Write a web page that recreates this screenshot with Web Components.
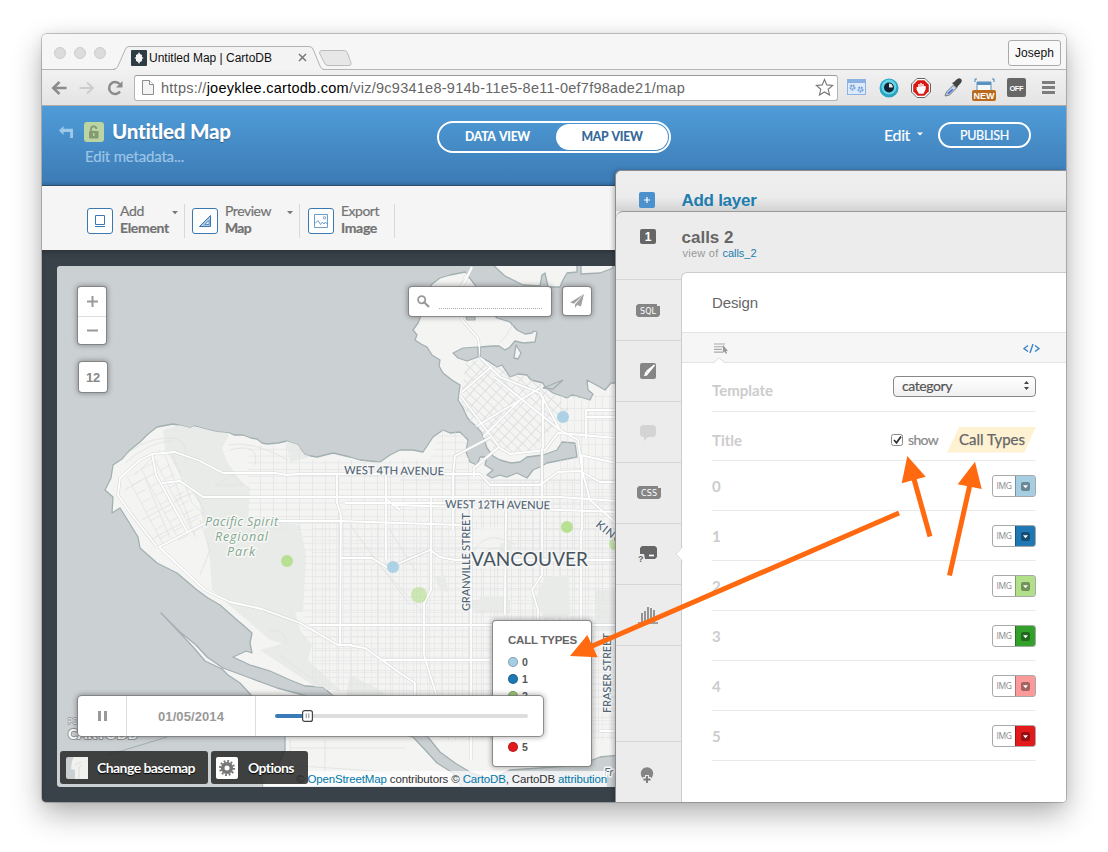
<!DOCTYPE html>
<html lang="en">
<head>
<meta charset="utf-8">
<title>Untitled Map | CartoDB</title>
<style>
html,body{margin:0;height:100%;overflow:hidden}
body{background:#fff;font-family:"Liberation Sans",Arial,sans-serif;display:flex;align-items:flex-start;justify-content:flex-start;padding:34px 42px;box-sizing:border-box;position:relative}
</style>
</head>
<body>
<browser-window>
  <browser-tabs slot="tabs"></browser-tabs>
  <browser-toolbar slot="toolbar"></browser-toolbar>
  <map-page></map-page>
</browser-window>
<pointer-arrows></pointer-arrows>

<script>
function define(name, html, setup) {
  const t = document.createElement('template');
  t.innerHTML = '<style>:host,*{box-sizing:border-box}svg{display:block;flex:none}</style>' + html;
  customElements.define(name, class extends HTMLElement {
    constructor() {
      super();
      this.attachShadow({mode: 'open'}).append(t.content.cloneNode(true));
    }
    connectedCallback() { if (setup) setup(this, this.shadowRoot); }
  });
}

define('browser-window', `
<style>
:host{display:flex;flex-direction:column;width:1024px;height:768px;border-radius:5px 5px 4px 4px;overflow:visible;position:relative;
 box-shadow:0 0 0 1px rgba(0,0,0,.2),0 12px 30px rgba(0,0,0,.31),0 0 12px rgba(0,0,0,.07)}
.in{display:flex;flex-direction:column;height:100%;border-radius:5px 5px 4px 4px;overflow:hidden;background:#f5f5f5}
</style>
<div class="in"><slot name="tabs"></slot><slot name="toolbar"></slot><slot></slot></div>`);

define('browser-tabs', `
<style>
:host{display:flex;height:36px;background:#f6f6f6;border-bottom:1px solid #b5b5b5;flex:none;align-items:center;position:relative}
.shape{position:absolute;left:0;top:0}
.lights{display:flex;gap:8px;padding-left:12px;position:relative;top:1px}
.lights i{width:12px;height:12px;border-radius:6px;background:#dcdcdc;border:1px solid #cdcdcd}
.tab{display:flex;align-items:center;margin-left:25px;position:relative;font-size:12px;color:#111;padding-top:12px;width:176px}
.tab fit-text{margin-left:2px}
.x{margin-left:auto}
.user{margin-left:auto;margin-right:5px;height:26px;width:53px;border:1px solid #aaa;border-radius:3px;background:#f9f9f9;display:flex;align-items:center;justify-content:center;font-size:12px;color:#111;margin-top:2px}
</style>
<svg class="shape" width="340" height="36" viewBox="42 34 340 36">
<path d="M114 70Q117 69 118 66L125.500 49Q126.500 46.500 129 46.500H309Q312 46.500 313 49L320 66Q321 69 324 70Z" fill="#f3f3f3"/>
<path d="M113 69.500Q117 69 118 66L125.500 49Q126.500 46.500 129 46.500H309Q312 46.500 313 49L320 66Q321 69 324 69.500" fill="none" stroke="#b2b2b2"/>
<path d="M322 50.500H344Q346.500 50.500 347.500 53L351 63Q351.500 65.500 349 65.500H328Q325.500 65.500 324.500 63L319.500 53Q319.500 50.500 322 50.500Z" fill="#e7e7e7" stroke="#bbb"/></svg>
<div class="lights"><i></i><i></i><i></i></div>
<div class="tab">
<svg width="16" height="16"><rect width="16" height="16" rx="1" fill="#2e3c43"/><path d="M8 2l1 2 2 1v2l1.500 1L11 9v2l-2 1-1 2-1-2-2-1V9L3.500 8 5 7V5l2-1z" fill="#f5f5f5"/></svg>
<fit-text w="123">Untitled Map | CartoDB</fit-text>
<svg class="x" width="9" height="9"><path d="M1 1l7 7M8 1l-7 7" stroke="#777" stroke-width="1.500"/></svg></div>
<div class="user"><fit-text w="39">Joseph</fit-text></div>`);

define('browser-toolbar', `
<style>
:host{display:flex;height:36px;flex:none;background:linear-gradient(#f1f1f1,#e4e4e4);border-bottom:1px solid #b0a9a5;align-items:center;padding-left:9px}
.nav{display:flex;gap:12px;width:83px}
.url{width:704px;height:26px;border:1px solid #b4b4b4;border-top-color:#999;border-radius:3px;background:#fff;display:flex;align-items:center;padding:0 3px 0 7px;font-size:14.500px;color:#666}
.url b{font-weight:400;color:#000}
.url fit-text{margin-left:7px}
.url .star{margin-left:auto}
.ext{display:flex;align-items:center;padding-left:9px}
.ext svg{margin-right:12.5px}
</style>
<div class="nav">
<svg width="16" height="16"><path d="M15.500 8H3M8.500 2L2.200 8l6.300 6" fill="none" stroke="#8b8b8b" stroke-width="2.500"/></svg>
<svg width="16" height="16"><path d="M.5 8H13M8 2.500L13.800 8 8 13.500" fill="none" stroke="#cdcdcd" stroke-width="2"/></svg>
<svg width="17" height="16"><path d="M13 11.500A6 6 0 1 1 12.600 4" fill="none" stroke="#8b8b8b" stroke-width="2.500"/><path d="M15.500 1v6.500H9z" fill="#8b8b8b"/></svg></div>
<div class="url"><svg width="12" height="15"><path d="M.5.5h7l4 4v10H.5z" fill="#f4f4f4" stroke="#8d8d8d"/><path d="M7.500.5v4h4" fill="#fff" stroke="#8d8d8d"/></svg>
<fit-text w="524">https://<b>joeyklee.cartodb.com</b>/viz/9c9341e8-914b-11e5-8e11-0ef7f98ade21/map</fit-text>
<svg class="star" width="19" height="19"><path d="M9.500 1.500l2.300 5.400 5.900.5-4.500 3.900 1.400 5.700-5.100-3-5.100 3 1.400-5.700L1.300 7.400l5.900-.5z" fill="#fdfdfd" stroke="#777" stroke-width="1.100"/></svg></div>
<div class="ext">
<svg width="19" height="17"><rect x=".5" y=".5" width="18" height="15" fill="#dce9fa" stroke="#8fb3e0"/><path d="M1 1h17v3H1z" fill="#8bb1e4"/><circle cx="5.500" cy="8.500" r="2" fill="none" stroke="#6b9bdb" stroke-width="2" stroke-dasharray="1.500 .7"/><circle cx="13.500" cy="10.500" r="2" fill="none" stroke="#6b9bdb" stroke-width="2" stroke-dasharray="1.500 .7"/></svg>
<svg width="20" height="20"><circle cx="10" cy="10" r="9.500" fill="#2aa3c0"/><circle cx="10" cy="9" r="7.500" fill="#62d4e8"/><circle cx="10" cy="9.500" r="5" fill="#123"/><path d="M10 9.500V5.500a4 4 0 0 1 3.800 4z" fill="#e8e8e8"/></svg>
<svg width="20" height="20"><path d="M6 .5h8L19.500 6v8L14 19.500H6L.5 14V6z" fill="#fff" stroke="#666"/><path d="M6.700 2.200h6.600l4.500 4.500v6.600l-4.500 4.500H6.700l-4.500-4.500V6.700z" fill="#d81a14"/><path d="M6.300 9v2.500l2 3.500h3.700l2-4V8M8 10.500V6M10 10V5M12 10V6" stroke="#fff" stroke-width="1.400" fill="#fff"/></svg>
<svg width="18" height="19"><path d="M1 18l1.500-4 7-7 3 3-7 7z" fill="#c4d5ef" stroke="#777"/><path d="M3 15.500L8 11l1.500.5-4.500 4.500z" fill="#3f69d4"/><path d="M8 5l2-1 2-2q3-3 5-1t-1 5l-2 2-1 2z" fill="#444"/></svg>
<svg width="24" height="24" viewBox="0 0 24 24" style="margin:2px 11px 0 -2px"><path d="M3 5V2h2M20 2h2v3" fill="none" stroke="#4384b0"/><path d="M5 13V5h14v8" fill="#f5f8fb" stroke="#5a93bd"/><path d="M5 5h14v3H5z" fill="#5a93bd"/><rect y="13" width="24" height="11" rx="2" fill="#b96a1d"/><text x="12" y="22" font-size="9" font-weight="700" text-anchor="middle" textLength="21" fill="#fff" font-family="Liberation Sans,Arial,sans-serif">NEW</text></svg>
<svg width="19" height="19"><rect width="19" height="19" rx="2" fill="#666"/><text x="9.500" y="12.500" font-size="7.500" font-weight="700" text-anchor="middle" textLength="14" fill="#fff" font-family="Liberation Sans,Arial,sans-serif">OFF</text></svg>
<svg width="13" height="13" style="margin:0 0 0 3px"><path d="M0 1.500h13M0 6.500h13M0 11.500h13" stroke="#7d7d7d" stroke-width="2.800"/></svg></div>`);

define('map-page', `
<style>:host{display:flex;flex-direction:column;flex:1;position:relative;min-height:0}
layer-panel{position:absolute;left:573px;top:64px;right:0;bottom:0}</style>
<page-header></page-header><page-tools></page-tools><map-stage></map-stage><layer-panel></layer-panel>`);

define('page-header', `
<style>
:host{display:flex;height:80px;flex:none;background:linear-gradient(#4f9cd8,#3d7cb6 95%,#346b9f);border-bottom:1px solid #2d4d6d;color:#fff;font-family:Lato,sans-serif;padding:15px 35px 0 17px;align-items:flex-start}
.back{margin-top:5px}
.lock{margin:1px 8px 0 10px}
.meta{width:353px;display:flex;flex-direction:column}
.t{font-weight:900;font-size:20.500px;line-height:21px;text-shadow:0 1px 1px rgba(0,0,0,.3)}
.m{font-size:15px;line-height:20px;color:#9cc4e6;margin:4px 0 0 -27px;-webkit-text-stroke:.2px}
.sw{width:234px;height:32px;border:2px solid #fff;border-radius:16px;display:flex;font-weight:900;font-size:12.2px;align-items:center;flex:none;margin-left:-28px;word-spacing:1.5px}
.sw div{flex:1;text-align:center;line-height:26px}
.sw .on{background:#fff;color:#36699a;border-radius:13px;height:26px;flex:none;width:112px;margin-right:1px}
.edit{margin-left:auto;font-size:16px;display:flex;align-items:center;height:28px;gap:7px;margin-top:-1px;-webkit-text-stroke:.2px}
.pub{margin:1px 0 0 15px;width:93px;height:26px;border:2px solid #fff;border-radius:13px;display:flex;align-items:center;justify-content:center;font-size:12.5px;-webkit-text-stroke:.2px}
</style>
<svg class="back" width="15" height="13"><path d="M4.500 0v2.800H14V12h-2.800V6H4.500v3L0 4.500z" fill="#9fc9ea"/></svg>
<svg class="lock" width="20" height="20"><rect width="20" height="20" rx="3" fill="#bcd3a3"/><path d="M7 10V7a2.700 2.700 0 0 1 5.400 0" fill="none" stroke="#849a73" stroke-width="1.800"/><rect x="5" y="9" width="9.500" height="7.500" rx="1" fill="#849a73"/><path d="M9.800 11v3" stroke="#bcd3a3" stroke-width="1.500"/></svg>
<div class="meta"><div class="t"><fit-text w="119">Untitled Map</fit-text></div><div class="m"><fit-text w="99">Edit metadata...</fit-text></div></div>
<div class="sw"><div><fit-text w="65">DATA VIEW</fit-text></div><div class="on"><fit-text w="61">MAP VIEW</fit-text></div></div>
<div class="edit"><fit-text w="26">Edit</fit-text><svg width="6" height="4"><path d="M0 .5h6L3 3.500z" fill="#fff"/></svg></div>
<div class="pub"><fit-text w="49">PUBLISH</fit-text></div>`);

define('tool-item', `
<style>
:host{display:flex;align-items:flex-start;height:34px;border-right:1px solid #d9d9d9;flex:none}
.ic{width:26px;height:26px;border:1px solid #3a79b0;border-radius:3px;background:#fff;margin-top:4px;display:flex;align-items:center;justify-content:center}
.tx{margin:-2px 0 0 7px;font:14px/17px Lato,sans-serif;color:#737373;display:flex;flex-direction:column;align-items:flex-start;-webkit-text-stroke:.2px}
.tx b{font-weight:700}
.c{margin:7px 6px 0 auto}
</style>
<div class="ic"><slot name="icon"></slot></div><div class="tx"><slot name="a"></slot><b><slot name="b"></slot></b></div>
<svg class="c" width="6" height="4"><path d="M0 0h6L3 3.200z" fill="#777"/></svg>`,
(el, r) => { if (el.hasAttribute('plain')) r.querySelector('.c').style.display = 'none'; });

define('page-tools', `
<style>
:host{display:flex;height:64px;flex:none;background:#f5f5f5;padding:18px 0 0 45px}
</style>
<tool-item style="width:98px"><svg slot="icon" width="12" height="14"><path d="M1.500 1.500h9v9h-9z" fill="none" stroke="#3a79b0"/><path d="M1 12.500h10" stroke="#3a79b0"/></svg><fit-text slot="a" w="24">Add</fit-text><fit-text slot="b" w="49">Element</fit-text></tool-item>
<tool-item style="width:108px;margin-left:7px"><svg slot="icon" width="14" height="14"><path d="M1.500 12.500h11V1.500z" fill="#a9c8e6" stroke="#3a79b0"/><path d="M7 10.500h4V6.500z" fill="#fff" stroke="#3a79b0" stroke-width=".8"/></svg><fit-text slot="a" w="46">Preview</fit-text><fit-text slot="b" w="26">Map</fit-text></tool-item>
<tool-item plain style="width:87px;margin-left:8px"><svg slot="icon" width="14" height="14"><path d="M.5.5h13v13H.5z" fill="none" stroke="#6d9dca"/><path d="M1 9.500l3-3 2.500 4 2-2.500 1.500 2 1.500-2 2 2.500" fill="none" stroke="#6d9dca"/><circle cx="10.500" cy="3.800" r="1.200" fill="none" stroke="#6d9dca"/></svg><fit-text slot="a" w="38">Export</fit-text><fit-text slot="b" w="36">Image</fit-text></tool-item>`);

define('map-stage', `
<style>
:host{display:block;flex:1;background:#394149;padding:16px 0 15px 15px;min-height:0;box-shadow:inset 0 4px 5px -2px #2b3238}
.map{position:relative;width:559px;height:521px;border-radius:3px 0 0 3px;overflow:hidden}
.box{position:absolute;background:#fff;border-radius:3px;box-shadow:0 0 0 1px rgba(120,120,120,.75),0 0 5px 2px rgba(0,0,0,.28)}
.zoom{left:21px;top:21px;width:28px;height:57px;display:grid;grid-template-rows:1fr 1fr;place-items:center}
.zoom div{width:28px;height:100%;display:grid;place-items:center}
.zoom div+div{border-top:1px solid #ddd}
.lvl{left:22px;top:96px;width:28px;height:30px;display:grid;place-items:center;font:bold 13px "Liberation Sans",sans-serif;color:#888}
.search{left:352px;top:21px;width:142px;height:29px;display:flex;padding-left:8px}
.search svg{margin-top:8px}
.search i{width:103px;height:22px;border-bottom:1px dotted #aaa;margin-left:9px}
.send{left:506px;top:21px;width:28px;height:28px;display:grid;place-items:center}
.legend{left:436px;top:355px;width:98px;height:145px;padding:12px 0 0 15px;font:bold 11.500px "Liberation Sans",sans-serif;color:#666}
.legend .h{line-height:15px;margin-bottom:5px;height:15px}
.player{left:21px;top:430px;width:465px;height:40px;display:flex;align-items:stretch;border-radius:4px}
.pause{width:49px;border-right:1px solid #ddd;display:grid;place-items:center}
.date{width:129px;border-right:1px solid #ddd;display:grid;place-items:center;font:bold 13px "Liberation Sans",sans-serif;color:#999}
.track{flex:1;display:flex;align-items:center;padding:0 15px 0 19px}
.track i{height:4px;background:#ddd;flex:1;border-radius:0 2px 2px 0}
.track i.d{background:#397bb9;flex:none;width:27px;border-radius:2px 0 0 2px}
.attr{position:absolute;right:9px;bottom:0;height:16px;width:344px;background:rgba(255,255,255,.7);font:11.500px/16px "Liberation Sans",sans-serif;color:#333;display:flex;justify-content:flex-end}
.attr a{color:#0078a8}
.btns{position:absolute;left:3px;bottom:3px;display:flex;gap:3px}
.btn{height:33px;background:rgba(38,38,38,.86);border-radius:3px;display:flex;align-items:center;padding-left:6px;color:#fff;font:bold 14px Lato,sans-serif;text-shadow:0 1px 1px #000}
.btn fit-text{margin-left:9px}
</style>
<div class="map"><city-map></city-map>
<div class="attr"><fit-text w="311">© <a>OpenStreetMap</a> contributors © <a>CartoDB</a>, CartoDB <a>attribution</a></fit-text></div>
<div class="box zoom"><div><svg width="11" height="11"><path d="M0 5.500h11M5.500 0v11" stroke="#999" stroke-width="2"/></svg></div><div><svg width="11" height="11"><path d="M0 5.500h11" stroke="#999" stroke-width="2"/></svg></div></div>
<div class="box lvl"><fit-text w="14">12</fit-text></div>
<div class="box search"><svg width="13" height="13"><circle cx="4.700" cy="4.700" r="3.600" fill="none" stroke="#999" stroke-width="1.800"/><path d="M7.500 7.500L12 12" stroke="#999" stroke-width="2.200"/></svg><i></i></div>
<div class="box send"><svg width="14" height="14"><path d="M14 0L0 8.500l4 1.200zM14 0L5 10.500V14l2.200-3L11 12.500z" fill="#a2a2a2"/></svg></div>
<div class="box legend"><div class="h"><fit-text w="69">CALL TYPES</fit-text></div>
<legend-row color="#a6cee3">0</legend-row><legend-row color="#1f78b4">1</legend-row><legend-row color="#9fce79">2</legend-row><legend-row color="#33a02c">3</legend-row><legend-row color="#fb9a99">4</legend-row><legend-row color="#e31a1c">5</legend-row></div>
<div class="box player"><div class="pause"><svg width="9" height="10"><path d="M1.500 0v10M7.500 0v10" stroke="#999" stroke-width="3"/></svg></div><div class="date"><fit-text w="66">01/05/2014</fit-text></div>
<div class="track"><i class="d"></i><svg width="11" height="12"><rect x=".6" y=".6" width="9.800" height="10.800" rx="2" fill="#fff" stroke="#444" stroke-width="1.200"/><path d="M4.200 3.500v4.500M6.800 3.500v4.500" stroke="#888"/></svg><i></i></div></div>
<div class="btns"><div class="btn" style="width:148px"><svg width="22" height="22"><rect width="22" height="22" rx="2" fill="#cbd0d3"/><path d="M8 0h14v22H9V13L5 12 6 4z" fill="#f1f1ee"/><path d="M13 22V10l3-2M9 8l6-3" stroke="#ddd" fill="none"/></svg><fit-text w="98">Change basemap</fit-text></div>
<div class="btn" style="width:97px;padding-left:5px"><svg width="22" height="22"><rect width="22" height="22" rx="2" fill="#fff"/><circle cx="11" cy="11" r="6.800" fill="none" stroke="#777" stroke-width="2.400" stroke-dasharray="1.800 1.760"/><circle cx="11" cy="11" r="4.300" fill="none" stroke="#777" stroke-width="3.600"/></svg><fit-text w="46" style="margin-left:10px">Options</fit-text></div></div>
</div>`);

define('legend-row', `
<style>:host{display:flex;align-items:center;height:17px;gap:4px;font-size:10.5px;color:#555}
i{width:10px;height:10px;border-radius:5px;border:1px solid rgba(0,0,0,.22)}span{padding-top:1px}</style><i></i><span><slot></slot></span>`,
(el, r) => { r.querySelector('i').style.background = el.getAttribute('color'); });

/* Street map: land, parks, street grids, arterials, labels and data points. */
define('city-map', `
<style>:host{display:block}
.c{fill:#f4f4f3;stroke:#a3b0b1;stroke-width:1.300;stroke-linejoin:round}
.w{fill:#cbd0d3;stroke:#a3b0b1;stroke-width:1.200;stroke-linejoin:round}
.p{fill:#e9ebe9}
.r0{fill:none;stroke:#d8dad9;stroke-width:3;stroke-linejoin:round}
.r1{fill:none;stroke:#fff;stroke-width:1.800;stroke-linejoin:round}
.s{fill:none;stroke:#dfe1e0;stroke-width:.8}
text{paint-order:stroke;stroke:#f7f7f6;stroke-width:3px;stroke-linejoin:round;font-family:Lato,sans-serif}
.a{fill:#536676;font-size:11.3px}
.a.b{stroke-width:2.500px;font-weight:500}
.g{fill:#83a88e;font:italic 12.5px "Open Sans",sans-serif}
</style>
<svg width="559" height="521" viewBox="57 266 559 521">
<defs>
<pattern id="g1" width="13" height="6.700" patternUnits="userSpaceOnUse"><path d="M.5 0V6.700M0 .5H13" stroke="#e4e5e5" stroke-width=".8" fill="none"/></pattern>
<pattern id="g2" width="7" height="12" patternUnits="userSpaceOnUse"><path d="M.5 0V12M0 .5H7" stroke="#e4e5e5" stroke-width=".8" fill="none"/></pattern>
<pattern id="g3" width="9" height="6.500" patternUnits="userSpaceOnUse" patternTransform="rotate(43)"><path d="M.5 0V6.500M0 .5H9" stroke="#dddfdf" stroke-width=".9" fill="none"/></pattern>
<pattern id="g4" width="16" height="10" patternUnits="userSpaceOnUse" patternTransform="rotate(-28)"><path d="M.5 0V10M0 .5H12" stroke="#e2e4e4" stroke-width=".8" fill="none"/></pattern>
<clipPath id="land"><path id="ls" d="M105 490L111 478 113 465 122 459 130 450 140 442 148 434 157 427 173 424 183 426 190 428 194 426 205 429 217 432 230 433 234 435 243 435 251 438 257 439 262 443 267 444 278 443 287 441 298 445 301 450 305 455 317 457 325 455 333 453 350 457 360 460 380 462 390 455 400 450 413 450 423 452 429 443 433 437 443 430 450 433 460 432 468 440 466 452 470 462 477 465 480 457 487 457 485 465 493 470 487 475 492 478 500 475 507 477 517 473 527 478 533 470 540 467 547 463 577 457 575 443 562 442 557 450 543 455 527 457 520 462 511 463 500 460 493 456 487 448 482 433 477 427 470 421 467 417 463 408 458 400 460 385 452 380 443 373 439 366 440 360 432 355 427 347 421 344 415 340 417 335 413 330 418 323 420 318 424 300 432 284 440 278 450 275 465 272 475 285 485 305 497 318 510 322 517 330 525 334 532 333 534 331 537 332 535 342 523 343 515 341 510 347 505 350 499 346 493 346 480 347 480 357 488 361 497 367 502 365 504 368 510 377 518 374 527 375 531 380 543 383 545 387 553 393 567 398 572 395 580 397 590 400 593 394 588 390 587 380 598 386 605 390 611 383 620 383V755L600 757 580 765 540 768 510 770 490 780 470 772 455 763 440 752 428 737 380 718 332 695 323 687 305 686 290 680 270 671 250 665 233 657 242 653 246 651 252 653 250 643 252 633 243 625 237 620 220 605 208 598 197 590 177 573 157 563 140 548 138 537 130 524 120 508 112 513 113 497Z"/></clipPath>
</defs>
<rect x="57" y="266" width="559" height="521" fill="#cbd0d3"/>
<path class="c" d="M493 265L505 276 523 285 540 286 542 275 545 273 548 287 560 287 563 280 567 273 577 272V265ZM581 265V274L600 273 613 268V265Z"/>
<use href="#ls" class="c"/>
<path class="c" d="M161 613L180 632 196 645 207 657 223 668 250 678 277 688 307 696 360 722 413 737 427 752 437 763 453 773 462 787H263L264 778 270 773 279 763 285 750V735L251 695 240 683 228 675 222 669 205 661 194 648 180 633Z"/>
<g clip-path="url(#land)">
<path class="p" d="M163 430L183 424 230 433 222 448 227 462 240 480 250 488 248 520 300 525 306 555 303 612 295 612 300 630 312 645 305 650 270 640 212 590 210 560 200 505 182 475 165 450ZM286 441L302 445 310 457 290 462ZM350 675L380 690 400 710 380 720 345 700ZM470 600H510V613H475ZM595 590H620V630H595ZM295 640L312 645 308 660 340 690 320 690 260 650Z"/>
<path fill="url(#g1)" d="M250 445H300V460H430L440 430H470V480H620V740H445L312 680V640H303V530H248V450Z"/>
<path fill="url(#g2)" d="M312 520H620V740H445L400 712 380 690 312 690Z" opacity=".7"/>
<path fill="url(#g2)" d="M560 395H620V600H480V480H560Z" opacity=".8"/>
<path fill="url(#g3)" d="M466 362L480 360 545 385 570 410 555 425 530 455 490 448 462 415 462 390Z"/>
<path fill="url(#g4)" d="M122 480L155 460 178 462 205 535 160 545Z"/>
<path fill="#f4f4f3" d="M470 530L505 525 508 560 480 570 465 550Z" opacity=".8"/>
<path class="p" d="M545 577L569 575 570 615 545 620 535 600ZM480 597H508V610H476ZM435 578l10-3 4 18-10-5zM500 543h12v10h-12z"/>
<path class="s" d="M120 460q20-20 45-22t20 25M125 463q25-22 48-22M135 475L160 450M165 455l30 80M172 453l20 50 20 20M230 450q30-8 25 15M228 445q25-5 60 15M215 485l18-10 10 10zM142 520l40-22M150 540l32-17M125 490l20-12 25 60M175 500l20-8 10 20-18 8M470 560q12-35 45-15M475 565q12-27 38-10M480 570q8-15 30-5M200 520l10 30-10 25M350 525l60 80M390 530l25 40M268 630q20 0 18 15M280 655l40 30M470 320q-5-20-10-35M515 320q-10 20-15 22"/>
</g>
<g class="s"><path d="M400 480H615M340 548H615M370 555L430 620M470 640V690M290 748h115M290 740v47M325 740v47M285 765l120 8M330 775q60-10 90 10"/></g>
<g id="roads" clip-path="url(#land)"></g>
<g id="bridges"></g>
<path class="w" d="M453 353L463 348 478 347 478 357 467 361 458 358ZM466 317h9v3h-8z"/>
<path d="M108 755L167 737M543 388l20-8-10 9z" fill="none" stroke="#a3b0b1" stroke-width="1.300"/>
<path class="c" d="M516 345l5 8-3 6-4-1z"/>
<g fill-opacity=".9"><circle cx="563" cy="417" r="6" fill="#a6cee3"/><circle cx="393" cy="567" r="6" fill="#a6cee3"/><circle cx="287" cy="561" r="6" fill="#b2df8a"/><circle cx="567" cy="527" r="6" fill="#b2df8a"/><circle cx="419" cy="595" r="8" fill="#b2df8a" fill-opacity=".6"/><circle cx="615" cy="544" r="6" fill="#b2df8a" fill-opacity=".7"/></g>
<text class="a b" x="344" y="474" textLength="100" transform="rotate(.7 344 474)">WEST 4TH AVENUE</text>
<text class="a b" x="445" y="508" textLength="105" transform="rotate(.7 445 508)">WEST 12TH AVENUE</text>
<text class="a b" transform="translate(470 611) rotate(-90)" textLength="98">GRANVILLE STREET</text>
<text class="a b" transform="translate(611 713) rotate(-90)" textLength="80">FRASER STREET</text>
<text class="a b" transform="translate(595 526) rotate(38)" textLength="30">KING</text>
<text class="a" x="604" y="776" font-style="italic">Fr</text>
<text x="471" y="566" textLength="117" font-size="19" fill="#47545f">VANCOUVER</text>
<text class="g" x="205" y="526" textLength="73">Pacific Spirit</text><text class="g" x="215" y="541" textLength="53">Regional</text><text class="g" x="227" y="556" textLength="28">Park</text>
<g><text x="68" y="724" font-size="7" fill="#fff" style="stroke:#8c9295;stroke-width:1.500px">POWERED BY</text><text x="68" y="739" font-size="14" font-weight="900" textLength="69" fill="#fff" style="stroke:#8c9295;stroke-width:2px">CARTODB</text></g>
</svg>`,
(el, r) => {
  const roads = [
    'M157 547L132 515 118 495 120 478 140 460 152 454 175 452 200 461 223 473 245 473 275 473 287 475 297 474H480L490 485H540L558 472 580 471 600 482H616',
    'M152 454L156 475 188 533M162 483L180 481 203 497H400L560 497 616 501', 'M159 547L205 523M278 521H340L460 525',
    'M159 547L205 590 230 602 262 609 300 623 338 645 352 645', 'M337 474V503L341 515 340 645', 'M340 558H372L388 568 430 550 440 557 455 560H616',
    'M386 476V560', 'M431 497V590L424 603V655L437 697', 'M453 530V476L455 456 475 445M471 500V760', 'M474 477V467',
    'M400 510L385 498M392 505L560 510 616 512', 'M506 497V520L505 590V615', 'M543 397V450M542 448V575L532 590 538 610V625',
    'M582 455V530M581 530V620M582 470L590 500 616 523', 'M345 625H616M310 625H345', 'M348 645L365 648 400 673 415 683V695', 'M380 660H490',
    'M455 301L462 320 478 338 481 358 500 377 540 393 560 430 578 440 582 470', 'M469 268L455 301', 'M462 392L490 368M460 395L500 448 510 454 545 450 558 433 616 438',
    'M586 438V410M586 417H616M586 410H616', 'M494 377L560 430M470 430L540 388M480 440L520 400',
    'M580 455L616 463M600 731H616M345 503L470 503'
  ];
  const bridges = ['M455 456L491 437', 'M474 468L499 447', 'M542 448V480', 'M463 285L472 267'];
  const draw = list => ['r0', 'r1'].map(c => list.map(d => '<path class="' + c + '" d="' + d + '"/>').join('')).join('');
  r.querySelector('#roads').innerHTML = draw(roads);
  r.querySelector('#bridges').innerHTML = draw(bridges);
});

define('img-swatch', `
<style>:host{display:flex;width:44px;height:22px;border:1px solid #a9a9a9;border-radius:3px;background:#fff;overflow:hidden;flex:none}
.t{flex:1;display:grid;place-items:center;font:8.5px/20px "Open Sans",sans-serif;color:#888}
.c{width:21px;margin:-1px -1px -1px 0;border:1px solid rgba(0,0,0,.28);border-radius:0 3px 3px 0;display:grid;place-items:center}
</style><div class="t"><fit-text w="15">IMG</fit-text></div><div class="c"><svg width="9" height="9"><rect width="9" height="9" rx="2" fill="#000" fill-opacity=".35"/><path d="M2 3.300h5L4.500 6.200z" fill="#fff"/></svg></div>`,
(el, r) => { r.querySelector('.c').style.background = el.getAttribute('color'); });

define('form-row', `
<style>:host{display:flex;height:50px;align-items:center;border-bottom:1px solid #eaeaea;font:bold 15px Lato,sans-serif;color:#ccc;flex:none;padding-top:1px}
div{margin-left:auto;display:flex;align-items:center;font-weight:400}</style><slot></slot><div><slot name="v"></slot></div>`);

define('layer-panel', `
<style>
:host{display:flex;flex-direction:column;background:#ececec;border:1px solid #8c8c8c;border-right:0;border-bottom:0;border-radius:6px 0 0 0;box-shadow:-2px 0 4px rgba(0,0,0,.22)}
.add{height:40px;display:flex;padding:21px 0 0 23px;font-weight:bold;font-size:17px;color:#207daf;background:linear-gradient(#eee 30%,#ececec 65%,#d2d2d2);border-radius:6px 0 0 0;line-height:17px;flex:none}
.add fit-text{margin-left:26.5px}
.card{flex:1;border-top:1px solid #999;border-radius:7px 0 0 0;background:#ececec;display:grid;grid-template-columns:65px 1fr;grid-template-rows:60px 1fr;min-height:0}
.num{padding:17px 0 0 24px}
.name{padding:16px 0 0 .5px;color:#666}
.name .n{font-weight:bold;font-size:17px;line-height:19px}
.name .v{font-size:11px;line-height:13px;color:#999;display:flex;gap:4px;padding-left:1px}
.name a{color:#207daf}
.side{display:flex;flex-direction:column;padding-top:7px}
.side div{height:61px;border-top:1px solid #d6d6d6;display:grid;place-items:center;flex:none;position:relative;padding-right:2px}
.side .gap{height:96px}
.notch{position:absolute;right:-2px;top:22px}
.body{background:#fff;border-left:1px solid #ccc;border-top:1px solid #ccc;border-radius:6px 0 0 0;display:flex;flex-direction:column;min-width:0}
.h{height:59px;padding:21px 0 0 30px;font-size:15px;line-height:18px;color:#666}
.strip{height:31px;background:#f6f6f6;border-top:1px solid #e4e4e4;border-bottom:1px solid #e4e4e4;display:flex;justify-content:space-between;align-items:center;padding:1px 26px 0 32px;position:relative}
.strip .up{position:absolute;left:31px;bottom:-2px}
.rows{padding:0 30px;display:flex;flex-direction:column}
.sel{width:143px;height:21px;border:1px solid #888;border-radius:4px;background:linear-gradient(#fff,#f0f0f0);display:flex;align-items:center;justify-content:space-between;padding:0 6px 1px 8px;color:#555;font-size:14px;margin-top:-8px;-webkit-text-stroke:.2px}
.show{display:flex;align-items:center;gap:5px;color:#888;font-size:14px;-webkit-text-stroke:.2px}
.tag{width:89px;height:26px;background:#fff2d3;clip-path:polygon(14% 0,100% 0,87% 100%,0 100%);margin:0 0 0 9px;color:#666;font-size:15px;display:flex;align-items:center;justify-content:center;padding:0 0 1px 1px;-webkit-text-stroke:.25px}
</style>
<div class="add"><svg width="16" height="16"><rect width="16" height="16" rx="2" fill="#4a91cd"/><path d="M5 8h6M8 5v6" stroke="#fff" stroke-width="1.200"/></svg><fit-text w="75">Add layer</fit-text></div>
<div class="card">
<div class="num"><svg width="16" height="15"><rect width="16" height="15" rx="2" fill="#666"/><text x="8" y="12" text-anchor="middle" font-size="12" font-weight="700" fill="#fff" font-family="Liberation Sans,Arial,sans-serif">1</text></svg></div>
<div class="name"><div class="n"><fit-text w="52">calls 2</fit-text></div><div class="v"><fit-text w="36">view of</fit-text><a><fit-text w="34">calls_2</fit-text></a></div></div>
<div class="side">
<div><svg width="24" height="13"><path d="M2 0h19v2h3v9l-2 2H2l-2-2V2z" fill="#858585"/><text x="4" y="9.500" font-size="8" textLength="16" fill="#fff" font-family="DejaVu Sans,sans-serif">SQL</text></svg></div>
<div><svg width="16" height="16"><rect width="16" height="16" rx="2" fill="#858585"/><path d="M14.500 2L8.500 9.500 7 8z" stroke="#fff" stroke-width="1.500" fill="#fff"/><path d="M6.500 8.500l2 2q-1 3-5 2.500 1.500-1 1.300-2.500t1.700-2z" fill="#fff"/></svg></div>
<div><svg width="16" height="16" style="margin-top:2px"><path d="M2 0h12l2 2v8l-2 2H8l-4 4V12H2l-2-2V2z" fill="#d4d4d4"/></svg></div>
<div><svg width="24" height="13" style="margin:-1px 0 0 2px"><path d="M2 0h19v2h3v9l-2 2H2l-2-2V2z" fill="#858585"/><text x="4" y="9.500" font-size="8" textLength="16" fill="#fff" font-family="DejaVu Sans,sans-serif">CSS</text></svg></div>
<div><svg width="19" height="16"><path d="M2 2l2-2h13l2 2v9l-2 2H7L6 8H2z" fill="#666"/><path d="M11 9.500h5" stroke="#fff" stroke-width="1.700"/><text x="0" y="15.500" font-size="9" font-weight="700" fill="#666" font-family="Liberation Sans,sans-serif">?</text></svg><svg class="notch" width="8" height="16"><path d="M8 .5L1 8l7 7.500z" fill="#fff"/><path d="M8 .5L1 8l7 7.500" fill="none" stroke="#ddd"/></svg></div>
<div><svg width="20" height="17"><path d="M0 16h20M4 15V6M7 15V4M10 15V0M13 15V1M16 15V3" stroke="#858585" stroke-width="1.700"/></svg></div>
<div class="gap"></div>
<div style="padding-top:6px;padding-right:4px"><svg width="14" height="17"><circle cx="7" cy="6.500" r="6.200" fill="#858585"/><path d="M7 8v8M3 12h8" stroke="#ececec" stroke-width="4"/><path d="M7 9v7M3.500 12.500h7" stroke="#777" stroke-width="1.800"/></svg></div>
</div>
<div class="body">
<div class="h"><fit-text w="46">Design</fit-text></div>
<div class="strip"><svg width="14" height="11"><path d="M0 1h11M0 3.700h9M0 6.400h8M0 9.100h9" stroke="#aaa" stroke-width="1.100"/><path d="M9 2v8l1.500-1.500L12 11l1-1-1-2h2z" fill="#999"/></svg>
<svg width="17" height="9"><path d="M5 1.500L1 4.500l4 3M12 1.500l4 3-4 3M10 0L7 9" stroke="#3b82c4" fill="none" stroke-width="1.400"/></svg>
<svg class="up" width="12" height="7"><path d="M0 6.500L6 1l6 5.500z" fill="#fff"/><path d="M0 6L6 .8 12 6" fill="none" stroke="#ddd"/></svg></div>
<div class="rows">
<form-row style="height:49px;padding-top:6px"><fit-text w="61">Template</fit-text><div slot="v" class="sel"><fit-text w="50">category</fit-text><svg width="5" height="9"><path d="M0 3l2.500-3L5 3zM0 6l2.500 3L5 6z" fill="#444"/></svg></div></form-row>
<form-row style="height:49px;padding-top:7px"><fit-text w="30">Title</fit-text><div slot="v" style="display:flex;align-items:center;height:28px"><span class="show"><svg width="12" height="13"><rect x=".5" y="1.500" width="11" height="11" rx="2" fill="#fff" stroke="#888"/><path d="M3 7l2.500 2.800L10 3.500" stroke="#333" stroke-width="1.800" fill="none"/></svg><fit-text w="30">show</fit-text></span><span class="tag"><fit-text w="66">Call Types</fit-text></span></div></form-row>
<form-row>0<img-swatch slot="v" color="#a6cee3"></img-swatch></form-row>
<form-row>1<img-swatch slot="v" color="#1f78b4"></img-swatch></form-row>
<form-row>2<img-swatch slot="v" color="#b2df8a"></img-swatch></form-row>
<form-row>3<img-swatch slot="v" color="#33a02c"></img-swatch></form-row>
<form-row>4<img-swatch slot="v" color="#fb9a99"></img-swatch></form-row>
<form-row>5<img-swatch slot="v" color="#e31a1c"></img-swatch></form-row>
</div></div></div>`);

define('pointer-arrows', `
<style>:host{position:absolute;left:0;top:0;pointer-events:none}</style>
<svg width="1108" height="852"><g stroke="#ff6a10" stroke-width="5"><path d="M899 513L590 647M930 536.500L912 472M949.500 575.500L971 480"/></g>
<g fill="#ff6a10"><path d="M570 656L587.300 635 597.700 657.300ZM907.300 456L901.700 483.300 925.700 476.700ZM975 461.700L957.700 484.300 981.700 489Z"/></g></svg>`);

/* Spreads its text over a given width with letter spacing. */
customElements.define('fit-text', class extends HTMLElement {
  constructor() {
    super();
    this.attachShadow({mode: 'open'}).innerHTML = '<style>:host{display:inline-block;white-space:nowrap;flex:none}</style><slot></slot>';
  }
  connectedCallback() {
    const w = +this.getAttribute('w'), n = this.textContent.length, now = this.getBoundingClientRect().width;
    if (now) this.style.letterSpacing = ((w - now) / n).toFixed(3) + 'px';
  }
});
</script>
</body>
</html>
